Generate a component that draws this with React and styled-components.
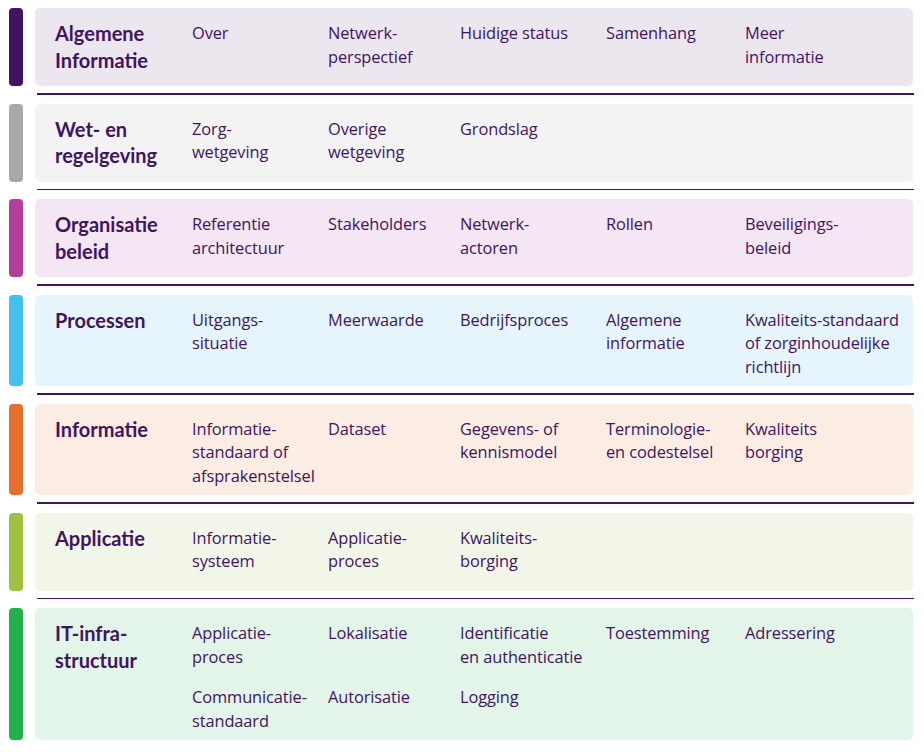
import React from "react";
import styled, { createGlobalStyle } from "styled-components";

const Global = createGlobalStyle`
  html, body { margin: 0; padding: 0; background: #ffffff; }
  body { font-family: "Open Sans", "Noto Sans", sans-serif; color: #42145f; }
`;

const Page = styled.div`
  width: 924px;
  padding: 8px 11px 0 9px;
  box-sizing: border-box;
`;

const Row = styled.div`
  display: flex;
  gap: 12px;
  align-items: stretch;
`;

const Bar = styled.div`
  width: 14px;
  flex: 0 0 14px;
  border-radius: 4px;
  background: ${(p) => p.$color};
`;

const Panel = styled.div`
  flex: 1;
  min-height: 78px;
  box-sizing: border-box;
  border-radius: 5px;
  background: ${(p) => p.$bg};
  padding: 10px 8px 8px 20px;
  display: grid;
  grid-template-columns: 137px 136px 132px 146px 139px 1fr;
  row-gap: 14px;
  align-content: start;
`;

const Label = styled.div`
  font-family: Lato, "Open Sans", sans-serif;
  font-weight: 700;
  font-size: 20px;
  line-height: 26.5px;
  color: #42145f;
  white-space: nowrap;
  margin-top: 2px;
  grid-row: span ${(p) => p.$span || 1};
`;

const Item = styled.div`
  font-size: 16.4px;
  line-height: 23.5px;
  color: #42145f;
  white-space: nowrap;
  margin-top: 3px;
  letter-spacing: -0.1px;
`;

const Divider = styled.div`
  height: 1.5px;
  background: #42145f;
  margin: 7px -1px 9px 28px;
`;

const rows = [
  {
    label: ["Algemene", "Informatie"],
    bar: "#42145f",
    bg: "#ece6ef",
    items: [["Over"], ["Netwerk-", "perspectief"], ["Huidige status"], ["Samenhang"], ["Meer", "informatie"]],
  },
  {
    label: ["Wet- en", "regelgeving"],
    bar: "#a8a8a8",
    bg: "#f3f3f4",
    items: [["Zorg-", "wetgeving"], ["Overige", "wetgeving"], ["Grondslag"]],
  },
  {
    label: ["Organisatie", "beleid"],
    bar: "#b2409a",
    bg: "#f4e6f2",
    items: [["Referentie", "architectuur"], ["Stakeholders"], ["Netwerk-", "actoren"], ["Rollen"], ["Beveiligings-", "beleid"]],
  },
  {
    label: ["Processen"],
    bar: "#42c1ec",
    bg: "#e6f5fc",
    items: [["Uitgangs-", "situatie"], ["Meerwaarde"], ["Bedrijfsproces"], ["Algemene", "informatie"], ["Kwaliteits-standaard", "of zorginhoudelijke", "richtlijn"]],
  },
  {
    label: ["Informatie"],
    bar: "#e5702b",
    bg: "#fbede4",
    items: [["Informatie-", "standaard of", "afsprakenstelsel"], ["Dataset"], ["Gegevens- of", "kennismodel"], ["Terminologie-", "en codestelsel"], ["Kwaliteits", "borging"]],
  },
  {
    label: ["Applicatie"],
    bar: "#9dc23f",
    bg: "#f2f6e9",
    items: [["Informatie-", "systeem"], ["Applicatie-", "proces"], ["Kwaliteits-", "borging"]],
  },
  {
    label: ["IT-infra-", "structuur"],
    bar: "#22b24c",
    bg: "#e3f4e8",
    span: 2,
    items: [
      ["Applicatie-", "proces"], ["Lokalisatie"], ["Identificatie", "en authenticatie"], ["Toestemming"], ["Adressering"],
      ["Communicatie-", "standaard"], ["Autorisatie"], ["Logging"],
    ],
  },
];

const Lines = ({ lines }) =>
  lines.map((l, i) => (
    <React.Fragment key={i}>
      {i > 0 && <br />}
      {l}
    </React.Fragment>
  ));

export default function App() {
  return (
    <>
      <Global />
      <Page>
        {rows.map((r, i) => (
          <React.Fragment key={i}>
            <Row>
              <Bar $color={r.bar} />
              <Panel $bg={r.bg}>
                <Label $span={r.span}>
                  <Lines lines={r.label} />
                </Label>
                {r.items.map((it, j) => (
                  <Item key={j}>
                    <Lines lines={it} />
                  </Item>
                ))}
              </Panel>
            </Row>
            {i < rows.length - 1 && <Divider />}
          </React.Fragment>
        ))}
      </Page>
    </>
  );
}
